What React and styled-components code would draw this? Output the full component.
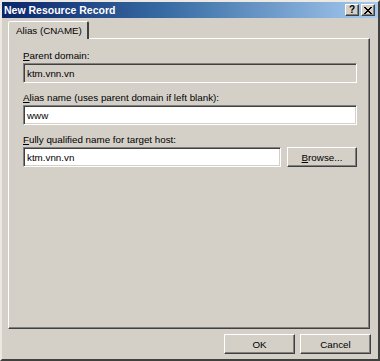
import styled, { createGlobalStyle } from "styled-components";

const GlobalStyle = createGlobalStyle`
  html, body {
    margin: 0;
    padding: 0;
    background: #d4d0c8;
  }
  * {
    box-sizing: border-box;
  }
`;

const raised = `
  border-style: solid;
  border-width: 1px;
  border-color: #ffffff #404040 #404040 #ffffff;
  box-shadow: inset -1px -1px 0 #808080, inset 1px 1px 0 #d4d0c8;
`;

export default function App() {
  return (
    <>
      <GlobalStyle />
      <Window>
        <TitleBar>
          <Title>New Resource Record</Title>
          <TitleButtons>
            <CaptionButton>?</CaptionButton>
            <CaptionButton>
              <svg width="8" height="7" viewBox="0 0 8 7">
                <path
                  d="M0 0h2v1h1v1h2V1h1V0h2v1H7v1H6v1H5v1h1v1h1v1h1v1H6V6H5V5H3v1H2v1H0V6h1V5h1V4h1V3H2V2H1V1H0z"
                  fill="#000"
                />
              </svg>
            </CaptionButton>
          </TitleButtons>
        </TitleBar>

        <Body>
          <TabStrip>
            <Tab>Alias (CNAME)</Tab>
          </TabStrip>
          <Panel>
            <Label>
              <u>P</u>arent domain:
            </Label>
            <Field disabled>ktm.vnn.vn</Field>

            <Label>
              <u>A</u>lias name (uses parent domain if left blank):
            </Label>
            <Field>www</Field>

            <Label>
              <u>F</u>ully qualified name for target host:
            </Label>
            <Row>
              <Field $grow>ktm.vnn.vn</Field>
              <Button $width={70}>
                <u>B</u>rowse...
              </Button>
            </Row>
          </Panel>
          <Footer>
            <Button $width={71}>OK</Button>
            <Button $width={71}>Cancel</Button>
          </Footer>
        </Body>
      </Window>
    </>
  );
}

const Window = styled.div`
  width: 380px;
  height: 361px;
  display: flex;
  flex-direction: column;
  background: #d4d0c8;
  border-style: solid;
  border-width: 2px;
  border-color: #ece9e2 #404040 #404040 #ece9e2;
  font-family: "Liberation Sans", Arial, sans-serif;
  font-size: 9.8px;
  color: #000;
`;

const TitleBar = styled.div`
  height: 16px;
  display: flex;
  align-items: center;
  justify-content: space-between;
  padding: 0 3px 0 2px;
  background: linear-gradient(to right, #0a246a 0%, #3a6ea5 45%, #a6caf0 100%);
`;

const Title = styled.span`
  color: #fff;
  font-weight: bold;
  font-size: 10.5px;
`;

const TitleButtons = styled.div`
  display: flex;
  gap: 2px;
`;

const CaptionButton = styled.div`
  width: 14px;
  height: 12px;
  display: flex;
  align-items: center;
  justify-content: center;
  background: #d4d0c8;
  font-weight: bold;
  font-size: 10px;
  line-height: 1;
  ${raised}
`;

const Body = styled.div`
  flex: 1;
  display: flex;
  flex-direction: column;
  padding: 3px 8px 0 6px;
`;

const TabStrip = styled.div`
  display: flex;
  height: 17px;
`;

const Tab = styled.div`
  height: 18px;
  padding: 2px 5px 0 7px;
  background: #d4d0c8;
  border-style: solid;
  border-width: 1px 2px 0 1px;
  border-color: #ffffff #404040 transparent #ffffff;
  border-radius: 2px 2px 0 0;
  position: relative;
  z-index: 1;
  line-height: 13px;
`;

const Panel = styled.div`
  height: 291px;
  display: flex;
  flex-direction: column;
  padding: 10px 12px 0 14px;
  border-style: solid;
  border-width: 1px;
  border-color: #ffffff #404040 #404040 #ffffff;
  box-shadow: inset -1px -1px 0 #808080;
`;

const Label = styled.div`
  line-height: 13px;
  margin-bottom: 1px;
`;

const Field = styled.div`
  height: 20px;
  flex: ${(p) => (p.$grow ? 1 : "none")};
  display: flex;
  align-items: center;
  padding: 0 3px;
  margin-bottom: 8px;
  background: ${(p) => (p.disabled ? "#d4d0c8" : "#ffffff")};
  border-style: solid;
  border-width: 1px;
  border-color: #808080 #ffffff #ffffff #808080;
  box-shadow: inset 1px 1px 0 #404040, inset -1px -1px 0 #d4d0c8;
`;

const Row = styled.div`
  display: flex;
  gap: 6px;
`;

const Button = styled.div`
  width: ${(p) => p.$width}px;
  height: 20px;
  display: flex;
  align-items: center;
  justify-content: center;
  background: #d4d0c8;
  ${raised}
`;

const Footer = styled.div`
  display: flex;
  justify-content: flex-end;
  gap: 5px;
  padding: 5px 0 0 0;
  margin-right: -1px;
`;
